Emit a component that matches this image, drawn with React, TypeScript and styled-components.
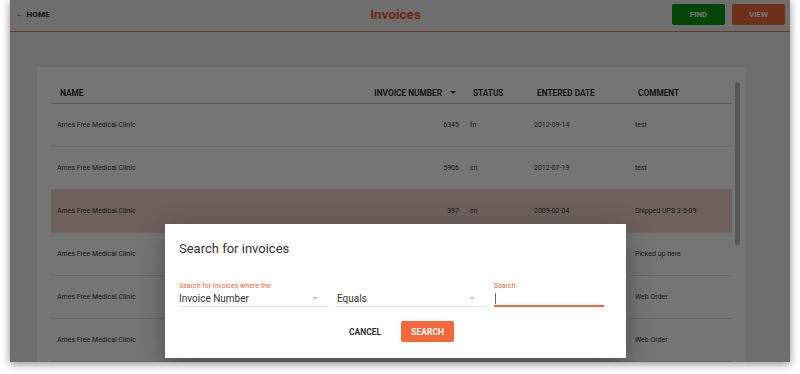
import { FunctionComponent, Fragment } from "react";
import styled, { createGlobalStyle } from "styled-components";

const GlobalStyle = createGlobalStyle`
  html, body {
    margin: 0;
    padding: 0;
    background: #ffffff;
    font-family: Roboto, "Liberation Sans", sans-serif;
  }
`;

const Stage = styled.div`
  width: 800px;
  height: 374px;
  overflow: hidden;
  background: #ffffff;
`;

const Window = styled.div`
  position: relative;
  margin-left: 10px;
  width: 780px;
  height: 362px;
  overflow: hidden;
  background: #f0f0f0;
  box-shadow: 0 2px 8px rgba(0, 0, 0, 0.45);
`;

const TopBar = styled.header`
  height: 31px;
  display: grid;
  grid-template-columns: 1fr auto 1fr;
  align-items: center;
  border-bottom: 1px solid #e8774d;
  padding: 0 5px 0 6px;
`;

const HomeLink = styled.a`
  font-size: 8px;
  font-weight: 700;
  color: #222;
  letter-spacing: 0.2px;
  margin-top: -2px;
`;

const Title = styled.h1`
  margin: -3px 0 0 -10px;
  font-size: 13.5px;
  font-weight: 700;
  color: #e8582a;
`;

const Actions = styled.div`
  display: flex;
  justify-content: flex-end;
  gap: 7px;
  margin-top: -2px;
`;

const ActionButton = styled.button<{ $bg: string }>`
  width: 53px;
  height: 21px;
  border: none;
  border-radius: 2px;
  background: ${(p) => p.$bg};
  color: #ffffff;
  font-family: inherit;
  font-size: 8px;
  font-weight: 700;
`;

const Card = styled.section`
  margin: 35px 0 0 27px;
  width: 708px;
  height: 320px;
  background: #ffffff;
  display: flex;
  padding: 15px 5px 0 14px;
  box-sizing: border-box;
  gap: 3px;
`;

const Table = styled.div`
  width: 681px;
  display: grid;
  grid-template-columns: 314px 99px 64px 101px 103px;
  grid-template-rows: 22px;
  grid-auto-rows: 43px;
  font-size: 7px;
  color: #333;
`;

const HeadCell = styled.div<{ $right?: boolean }>`
  display: flex;
  align-items: center;
  justify-content: ${(p) => (p.$right ? "flex-end" : "flex-start")};
  padding: ${(p) => (p.$right ? "0 8px 0 0" : "0 0 0 9px")};
  font-size: 8.3px;
  font-weight: 600;
  color: #222;
  border-bottom: 1px solid #c6c6c6;
  gap: 8px;
`;

const Cell = styled.div<{ $right?: boolean; $hl?: boolean }>`
  display: flex;
  align-items: center;
  justify-content: ${(p) => (p.$right ? "flex-end" : "flex-start")};
  padding: ${(p) => (p.$right ? "0 5px 0 0" : "0 0 0 6px")};
  border-bottom: 1px solid #e4e4e4;
  background: ${(p) => (p.$hl ? "#f2d2c9" : "transparent")};
`;

const SortArrow = styled.span`
  width: 0;
  height: 0;
  border-left: 3px solid transparent;
  border-right: 3px solid transparent;
  border-top: 3px solid #444;
`;

const ScrollTrack = styled.div`
  width: 5px;
`;

const ScrollThumb = styled.div`
  width: 5px;
  height: 163px;
  border-radius: 3px;
  background: #bdbdbd;
`;

const Backdrop = styled.div`
  position: absolute;
  inset: 0;
  background: rgba(0, 0, 0, 0.54);
`;

const Dialog = styled.div`
  position: absolute;
  left: 155px;
  top: 224px;
  width: 461px;
  height: 134px;
  background: #ffffff;
  box-sizing: border-box;
  padding: 16px 22px 0 14px;
  box-shadow: 0 8px 24px rgba(0, 0, 0, 0.35);
  display: flex;
  flex-direction: column;
`;

const DialogTitle = styled.h2`
  margin: 0;
  font-size: 13px;
  font-weight: 400;
  color: #333;
  line-height: 18px;
`;

const Fields = styled.div`
  margin-top: 23px;
  display: grid;
  grid-template-columns: 150px 149px 110px;
  gap: 8px;
`;

const Field = styled.div`
  display: flex;
  flex-direction: column;
`;

const FieldLabel = styled.label`
  font-size: 7px;
  color: #f4683a;
  height: 10px;
  line-height: 10px;
`;

const SelectBox = styled.div`
  height: 15px;
  display: flex;
  align-items: center;
  justify-content: space-between;
  font-size: 10px;
  color: #333;
  border-bottom: 1px solid #e2e2e2;
  padding-right: 11px;
`;

const Caret = styled.span`
  width: 0;
  height: 0;
  border-left: 3px solid transparent;
  border-right: 3px solid transparent;
  border-top: 3px solid #c8c8c8;
`;

const SearchInput = styled.div`
  height: 14px;
  display: flex;
  align-items: center;
  border-bottom: 2px solid #f4683a;
`;

const TextCursor = styled.span`
  width: 1px;
  height: 11px;
  margin-left: 1px;
  background: #666;
`;

const DialogActions = styled.div`
  margin-top: 14px;
  display: flex;
  justify-content: center;
  align-items: center;
  gap: 20px;
  padding-left: 20px;
`;

const TextButton = styled.button`
  border: none;
  background: none;
  font-family: inherit;
  font-size: 8.5px;
  font-weight: 700;
  color: #333;
  padding: 0;
`;

const PrimaryButton = styled.button`
  width: 53px;
  height: 21px;
  border: none;
  border-radius: 2px;
  background: #f4683a;
  color: #ffffff;
  font-family: inherit;
  font-size: 8.5px;
  font-weight: 700;
`;

const rows = [
  { n: "6345", s: "fn", d: "2012-09-14", c: "test" },
  { n: "5906", s: "cn", d: "2012-07-19", c: "test" },
  { n: "397", s: "cn", d: "2009-02-04", c: "Shipped UPS 3-5-09", hl: true },
  { n: "5012", s: "cn", d: "2011-03-10", c: "Picked up here" },
  { n: "4871", s: "cn", d: "2010-11-22", c: "Web Order" },
  { n: "4820", s: "cn", d: "2010-10-05", c: "Web Order" },
];

const App: FunctionComponent = () => {
  return (
    <Stage>
      <GlobalStyle />
      <Window>
        <TopBar>
          <HomeLink>← HOME</HomeLink>
          <Title>Invoices</Title>
          <Actions>
            <ActionButton $bg="#0a9a12">FIND</ActionButton>
            <ActionButton $bg="#f26a3a">VIEW</ActionButton>
          </Actions>
        </TopBar>
        <Card>
          <Table>
            <HeadCell>NAME</HeadCell>
            <HeadCell $right>
              INVOICE NUMBER <SortArrow />
            </HeadCell>
            <HeadCell>STATUS</HeadCell>
            <HeadCell>ENTERED DATE</HeadCell>
            <HeadCell>COMMENT</HeadCell>
            {rows.map((r, i) => (
              <Fragment key={i}>
                <Cell $hl={r.hl}>Ames Free Medical Clinic</Cell>
                <Cell $hl={r.hl} $right>
                  {r.n}
                </Cell>
                <Cell $hl={r.hl}>{r.s}</Cell>
                <Cell $hl={r.hl}>{r.d}</Cell>
                <Cell $hl={r.hl}>{r.c}</Cell>
              </Fragment>
            ))}
          </Table>
          <ScrollTrack>
            <ScrollThumb />
          </ScrollTrack>
        </Card>
        <Backdrop />
        <Dialog>
          <DialogTitle>Search for invoices</DialogTitle>
          <Fields>
            <Field>
              <FieldLabel>Search for invoices where the</FieldLabel>
              <SelectBox>
                Invoice Number <Caret />
              </SelectBox>
            </Field>
            <Field>
              <FieldLabel />
              <SelectBox>
                Equals <Caret />
              </SelectBox>
            </Field>
            <Field>
              <FieldLabel>Search</FieldLabel>
              <SearchInput>
                <TextCursor />
              </SearchInput>
            </Field>
          </Fields>
          <DialogActions>
            <TextButton>CANCEL</TextButton>
            <PrimaryButton>SEARCH</PrimaryButton>
          </DialogActions>
        </Dialog>
      </Window>
    </Stage>
  );
};

export default App;
